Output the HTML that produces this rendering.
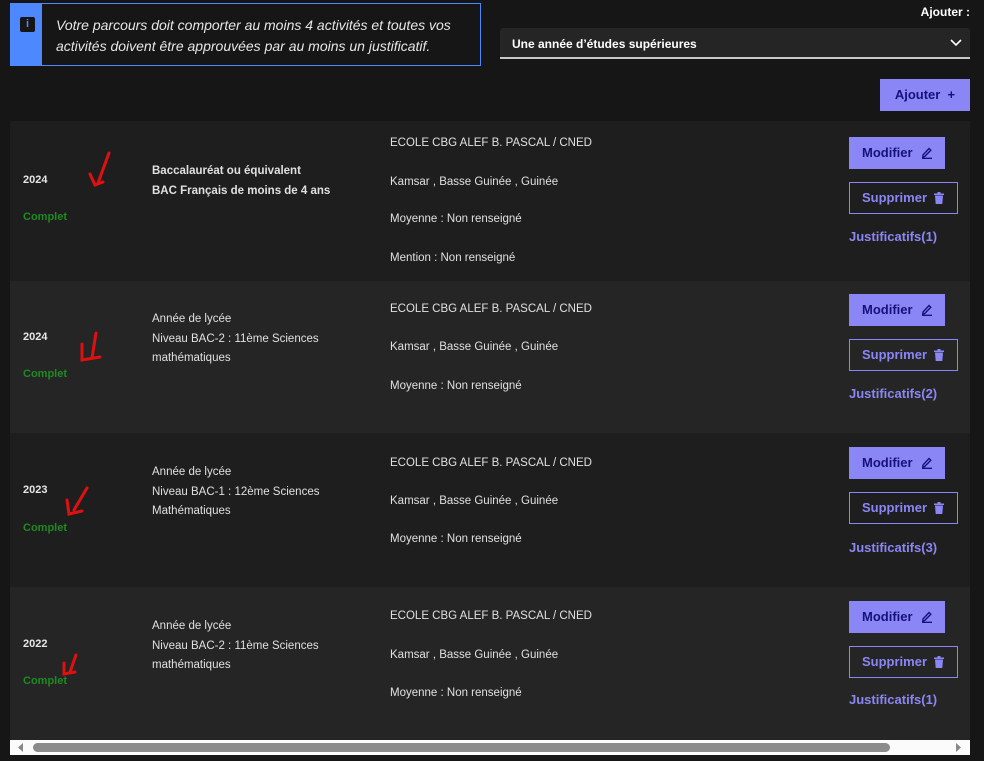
<!DOCTYPE html>
<html><head><meta charset="utf-8"><style>
*{margin:0;padding:0;box-sizing:border-box}
body{width:984px;height:761px;background:#161616;font-family:"Liberation Sans",sans-serif;color:#e6e6e6;position:relative;overflow:hidden;font-size:12px}
.a{position:absolute;white-space:nowrap}
.info{position:absolute;left:10px;top:3px;width:471px;height:63px;border:1px solid #4d88ff;background:#161616}
.info .bar{position:absolute;left:0;top:0;width:31px;height:100%;background:#4d88ff}
.info .ic{position:absolute;left:9px;top:13px;width:15px;height:15px;background:#161616;border-radius:2px;color:#4d88ff;font-size:11px;font-weight:bold;text-align:center;line-height:15px}
.info p{position:absolute;left:45px;top:11px;font-style:italic;font-size:14px;line-height:21px;color:#e6e6e6}
.sel{position:absolute;left:500px;top:28px;width:470px;height:31px;background:#252525;border-bottom:2px solid #c8c8c8;border-radius:3px 3px 0 0}
.btnadd{position:absolute;left:880px;top:79px;width:90px;height:32px;background:#8b86f5;color:#16127a;font-size:13px;font-weight:bold;line-height:32px;text-align:center}
.row{position:absolute;left:10px;width:960px}
.r1{top:121px;height:160px;background:#1e1e1e}
.r2{top:281px;height:152px;background:#252525}
.r3{top:433px;height:154px;background:#1e1e1e}
.r4{top:587px;height:153px;background:#252525}
.y{font-weight:bold;font-size:11px;color:#e6e6e6}
.c{font-weight:bold;font-size:11px;color:#1f8a1f}
.t{font-size:11.5px;line-height:19.5px;color:#e0e0e0}
.b{font-weight:bold}
.mod{position:absolute;width:96px;height:32px;background:#8b86f5;color:#16127a;font-weight:bold;font-size:13px;line-height:32px;padding-left:13px}
.sup{position:absolute;width:109px;height:32px;border:1px solid #8b86f5;color:#8b86f5;font-weight:bold;font-size:13px;line-height:30px;padding-left:12px}
.mod svg,.sup svg{position:absolute;top:9px}
.mod svg{left:72px}.sup svg{left:84px}
.jus{color:#8b86f5;font-weight:bold;font-size:13px}
.sb{position:absolute;left:10px;top:740px;width:960px;height:15px;background:#fbfbfb}
.thumb{position:absolute;left:23px;top:3px;width:857px;height:9px;background:#8b8b8b;border-radius:5px}
</style></head><body>
<div class="info"><div class="bar"><div class="ic">i</div></div><p>Votre parcours doit comporter au moins 4 activités et toutes vos<br>activités doivent être approuvées par au moins un justificatif.</p></div>
<div class="a b" style="right:14px;top:5px;font-size:12px;color:#fff">Ajouter :</div>
<div class="sel"><span class="a b" style="left:12px;top:9px;font-size:12px;color:#fff">Une année d’études supérieures</span>
<svg class="a" style="right:8px;top:11px" width="12" height="8" viewBox="0 0 12 8"><path d="M1 1l5 5 5-5" stroke="#fff" stroke-width="1.6" fill="none"/></svg></div>
<div class="btnadd">Ajouter &nbsp;+</div>

<div class="row r1"></div><div class="row r2"></div><div class="row r3"></div><div class="row r4"></div>

<!-- row1 -->
<div class="a y" style="left:23px;top:174px">2024</div>
<div class="a c" style="left:23px;top:211px">Complet</div>
<div class="a t b" style="left:152px;top:162px">Baccalauréat ou équivalent<br>BAC Français de moins de 4 ans</div>
<div class="a t" style="left:390px;top:134px">ECOLE CBG ALEF B. PASCAL / CNED</div>
<div class="a t" style="left:390px;top:173px">Kamsar , Basse Guinée , Guinée</div>
<div class="a t" style="left:390px;top:210px">Moyenne : Non renseigné</div>
<div class="a t" style="left:390px;top:249px">Mention : Non renseigné</div>
<svg class="a" style="left:86px;top:150px" width="30" height="40"><path d="M23 3 L12 33 M4 24 L9 35 L17 32" stroke="#e01010" stroke-width="3" fill="none" stroke-linecap="round"/></svg>
<div class="mod" style="left:849px;top:137px">Modifier<svg width="12" height="13" viewBox="0 0 12 13"><path d="M2 9L8 2.5 9.8 4.3 3.6 10.6 1.8 11z M1 12.3H11" stroke="#16127a" stroke-width="1.4" fill="none"/></svg></div>
<div class="sup" style="left:849px;top:182px">Supprimer<svg width="10" height="12" viewBox="0 0 10 12"><path d="M0 1.5h10v1.5H0z M3.5 0h3v1.5h-3z M1 3.5h8l-.7 8.5H1.7z" fill="#8b86f5"/></svg></div>
<div class="a jus" style="left:849px;top:229px">Justificatifs(1)</div>

<!-- row2 -->
<div class="a y" style="left:23px;top:331px">2024</div>
<div class="a c" style="left:23px;top:368px">Complet</div>
<div class="a t" style="left:152px;top:310px">Année de lycée<br>Niveau BAC-2 : 11ème Sciences<br>mathématiques</div>
<div class="a t" style="left:390px;top:300px">ECOLE CBG ALEF B. PASCAL / CNED</div>
<div class="a t" style="left:390px;top:338px">Kamsar , Basse Guinée , Guinée</div>
<div class="a t" style="left:390px;top:377px">Moyenne : Non renseigné</div>
<svg class="a" style="left:76px;top:330px" width="30" height="34"><path d="M20 3 L16 28 M6 14 L6 30 L24 27" stroke="#e01010" stroke-width="3" fill="none" stroke-linecap="round"/></svg>
<div class="mod" style="left:849px;top:294px">Modifier<svg width="12" height="13" viewBox="0 0 12 13"><path d="M2 9L8 2.5 9.8 4.3 3.6 10.6 1.8 11z M1 12.3H11" stroke="#16127a" stroke-width="1.4" fill="none"/></svg></div>
<div class="sup" style="left:849px;top:339px">Supprimer<svg width="10" height="12" viewBox="0 0 10 12"><path d="M0 1.5h10v1.5H0z M3.5 0h3v1.5h-3z M1 3.5h8l-.7 8.5H1.7z" fill="#8b86f5"/></svg></div>
<div class="a jus" style="left:849px;top:386px">Justificatifs(2)</div>

<!-- row3 -->
<div class="a y" style="left:23px;top:484px">2023</div>
<div class="a c" style="left:23px;top:522px">Complet</div>
<div class="a t" style="left:152px;top:463px">Année de lycée<br>Niveau BAC-1 : 12ème Sciences<br>Mathématiques</div>
<div class="a t" style="left:390px;top:454px">ECOLE CBG ALEF B. PASCAL / CNED</div>
<div class="a t" style="left:390px;top:492px">Kamsar , Basse Guinée , Guinée</div>
<div class="a t" style="left:390px;top:530px">Moyenne : Non renseigné</div>
<svg class="a" style="left:62px;top:484px" width="30" height="34"><path d="M25 4 L12 26 M5 16 L7 30 L20 27" stroke="#e01010" stroke-width="3" fill="none" stroke-linecap="round"/></svg>
<div class="mod" style="left:849px;top:447px">Modifier<svg width="12" height="13" viewBox="0 0 12 13"><path d="M2 9L8 2.5 9.8 4.3 3.6 10.6 1.8 11z M1 12.3H11" stroke="#16127a" stroke-width="1.4" fill="none"/></svg></div>
<div class="sup" style="left:849px;top:492px">Supprimer<svg width="10" height="12" viewBox="0 0 10 12"><path d="M0 1.5h10v1.5H0z M3.5 0h3v1.5h-3z M1 3.5h8l-.7 8.5H1.7z" fill="#8b86f5"/></svg></div>
<div class="a jus" style="left:849px;top:540px">Justificatifs(3)</div>

<!-- row4 -->
<div class="a y" style="left:23px;top:638px">2022</div>
<div class="a c" style="left:23px;top:675px">Complet</div>
<div class="a t" style="left:152px;top:617px">Année de lycée<br>Niveau BAC-2 : 11ème Sciences<br>mathématiques</div>
<div class="a t" style="left:390px;top:607px">ECOLE CBG ALEF B. PASCAL / CNED</div>
<div class="a t" style="left:390px;top:646px">Kamsar , Basse Guinée , Guinée</div>
<div class="a t" style="left:390px;top:684px">Moyenne : Non renseigné</div>
<svg class="a" style="left:58px;top:652px" width="26" height="26"><path d="M18 3 L12 20 M6 11 L6 22 L17 20" stroke="#e01010" stroke-width="3" fill="none" stroke-linecap="round"/></svg>
<div class="mod" style="left:849px;top:601px">Modifier<svg width="12" height="13" viewBox="0 0 12 13"><path d="M2 9L8 2.5 9.8 4.3 3.6 10.6 1.8 11z M1 12.3H11" stroke="#16127a" stroke-width="1.4" fill="none"/></svg></div>
<div class="sup" style="left:849px;top:646px">Supprimer<svg width="10" height="12" viewBox="0 0 10 12"><path d="M0 1.5h10v1.5H0z M3.5 0h3v1.5h-3z M1 3.5h8l-.7 8.5H1.7z" fill="#8b86f5"/></svg></div>
<div class="a jus" style="left:849px;top:692px">Justificatifs(1)</div>

<div class="sb"><svg class="a" style="left:8px;top:3px" width="6" height="9"><path d="M5 0L0 4.5 5 9z" fill="#888"/></svg><div class="thumb"></div><svg class="a" style="left:946px;top:3px" width="6" height="9"><path d="M0 0L5 4.5 0 9z" fill="#888"/></svg></div>
</body></html>
